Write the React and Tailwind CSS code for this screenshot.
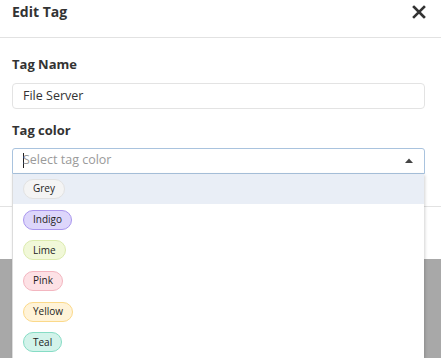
import { useState } from "react";

const colors = [
  { name: "Grey", cls: "bg-[#f4f4f4] border-[#e2e2e2]" },
  { name: "Indigo", cls: "bg-[#ddd6fb] border-[#a996ee]" },
  { name: "Lime", cls: "bg-[#f1f8d8] border-[#dcebae]" },
  { name: "Pink", cls: "bg-[#fde1e5] border-[#f3b6c0]" },
  { name: "Yellow", cls: "bg-[#fff3d8] border-[#fbd98a]" },
  { name: "Teal", cls: "bg-[#d2f3ea] border-[#86dcc5]" },
];

export default function App() {
  const [name, setName] = useState("File Server");

  return (
    <div className="w-[441px] h-[358px] overflow-hidden bg-[#a8a8a8] text-[#333] font-['Open_Sans',sans-serif]">
      {/* modal */}
      <div className="bg-white">
        <div className="h-[38px] border-b border-[#e2e2e2] flex justify-between items-start pl-3 pr-[15px] pt-[2px]">
          <h1 className="text-[14px] leading-[20px] font-bold">Edit Tag</h1>
          <button className="mt-[3px]">
            <svg width="14" height="14" viewBox="0 0 14 14">
              <path d="M2 2 L12 12 M12 2 L2 12" stroke="#333" strokeWidth="2.6" strokeLinecap="square" />
            </svg>
          </button>
        </div>

        <div className="pl-3 pr-4 pt-4 pb-[32px] border-b border-[#e2e2e2]">
          <label className="block text-[13px] leading-[20px] font-bold mb-2">Tag Name</label>
          <input
            value={name}
            onChange={(e) => setName(e.target.value)}
            className="w-full h-[26px] border border-[#e3e3e3] rounded-[4px] px-[10px] text-[12.5px] outline-none"
          />
          <label className="block text-[13px] leading-[20px] font-bold mt-[11px] mb-2">Tag color</label>
          <div className="relative">
            <div className="h-[26px] border border-[#a9c3de] rounded-t-[3px] flex items-center pl-[10px] pr-[10px]">
              <span className="w-px h-[15px] bg-[#222] -mr-px" />
              <span className="flex-1 text-[12.5px] text-[#9a9a9a]">Select tag color</span>
              <svg width="8" height="5" viewBox="0 0 8 5" className="mr-[1px]">
                <path d="M0 5 L4 0.5 L8 5 Z" fill="#444" />
              </svg>
            </div>
            {/* dropdown list */}
            <ul className="absolute left-0 right-[1px] top-[26px] z-10 bg-white border-l border-[#dcdcdc] shadow-[1px_1px_3px_rgba(0,0,0,0.18)]">
              {colors.map((c, i) => (
                <li
                  key={c.name}
                  className={`h-[30.7px] flex items-center pl-[10px] ${i === 0 ? "bg-[#e9eef6]" : ""}`}
                >
                  <span className={`h-[20px] px-[9px] rounded-full border flex items-center text-[10px] text-[#222] ${c.cls}`}>
                    {c.name}
                  </span>
                </li>
              ))}
            </ul>
          </div>
        </div>
        <div className="h-[52px]" />
      </div>
    </div>
  );
}
